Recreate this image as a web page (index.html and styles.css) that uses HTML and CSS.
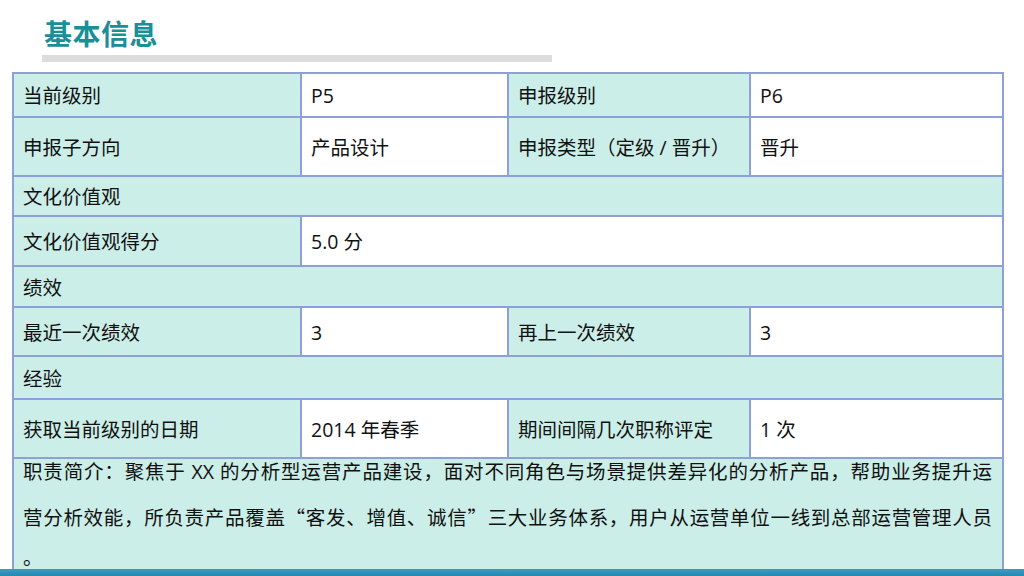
FILE: index.html
```html
<!DOCTYPE html>
<html lang="zh">
<head>
<meta charset="utf-8">
<link rel="stylesheet" href="styles.css">
</head>
<body>
<div class="slide">
  <header class="head">
    <h1 class="title">基本信息</h1>
    <div class="rule"></div>
  </header>
  <table class="info">
    <colgroup>
      <col class="c1"><col class="c2"><col class="c3"><col class="c4">
    </colgroup>
    <tr class="r44">
      <td class="lab">当前级别</td><td class="val">P5</td>
      <td class="lab">申报级别</td><td class="val">P6</td>
    </tr>
    <tr class="r59">
      <td class="lab">申报子方向</td><td class="val">产品设计</td>
      <td class="lab">申报类型（定级 / 晋升）</td><td class="val">晋升</td>
    </tr>
    <tr class="r40">
      <td class="lab" colspan="4">文化价值观</td>
    </tr>
    <tr class="r50">
      <td class="lab">文化价值观得分</td><td class="val" colspan="3">5.0 分</td>
    </tr>
    <tr class="r41">
      <td class="lab" colspan="4">绩效</td>
    </tr>
    <tr class="r49">
      <td class="lab">最近一次绩效</td><td class="val">3</td>
      <td class="lab">再上一次绩效</td><td class="val">3</td>
    </tr>
    <tr class="r43">
      <td class="lab" colspan="4">经验</td>
    </tr>
    <tr class="r59">
      <td class="lab">获取当前级别的日期</td><td class="val">2014 年春季</td>
      <td class="lab">期间间隔几次职称评定</td><td class="val">1 次</td>
    </tr>
    <tr>
      <td class="lab desc" colspan="4">
        <div class="line">职责简介：聚焦于 XX 的分析型运营产品建设，面对不同角色与场景提供差异化的分析产品，帮助业务提升运</div>
        <div class="line">营分析效能，所负责产品覆盖<span class="cjk">“</span>客发、增值、诚信<span class="cjk">”</span>三大业务体系，用户从运营单位一线到总部运营管理人员</div>
        <div class="line">。</div>
      </td>
    </tr>
  </table>
  <div class="band"></div>
</div>
</body>
</html>
```

FILE: styles.css
```css
html, body {
  margin: 0;
  padding: 0;
  background: #ffffff;
}
.slide {
  position: relative;
  width: 1024px;
  height: 576px;
  overflow: hidden;
  background: #ffffff;
  font-family: "Open Sans", "Noto Sans CJK SC", sans-serif;
  color: #111111;
}
.head {
  padding: 15px 0 0 42px;
  height: 57px;
}
.title {
  margin: 0;
  font-family: "Noto Sans CJK SC", sans-serif;
  font-weight: 700;
  font-size: 28px;
  line-height: 36px;
  color: #1b8e98;
  padding-left: 2px;
  letter-spacing: 0.5px;
}
.rule {
  margin-top: 4px;
  width: 510px;
  height: 7px;
  background: #dcdcdc;
}
.info {
  margin-left: 12px;
  margin-top: 0;
  width: 990px;
  table-layout: fixed;
  border-collapse: collapse;
  font-size: 19.5px;
}
.c1 { width: 288px; }
.c2 { width: 207px; }
.c3 { width: 242px; }
.c4 { width: 253px; }
.info td {
  border: 2px solid #8fa0d8;
  padding: 2px 0 0 9px;
  vertical-align: middle;
  white-space: nowrap;
  line-height: 24px;
}
.lab { background: #cceee8; }
.val { background: #ffffff; }
.r44 { height: 44px; }
.r59 { height: 59px; }
.r40 { height: 40px; }
.r50 { height: 50px; }
.r41 { height: 41px; }
.r49 { height: 49px; }
.r43 { height: 43px; }
.info td.desc {
  vertical-align: top;
  padding: 1px 10px 0 9px;
  height: 150px;
}
.cjk {
  font-family: "Noto Sans CJK SC", sans-serif;
}
.line {
  height: 45px;
  line-height: 24px;
  text-align: justify;
  text-align-last: justify;
}
.line:last-child {
  text-align-last: left;
  margin-top: -4px;
}
.band {
  position: absolute;
  left: 0;
  right: 0;
  bottom: 0;
  height: 7px;
  background: linear-gradient(#3a9cc0, #2a86ad);
}
```
